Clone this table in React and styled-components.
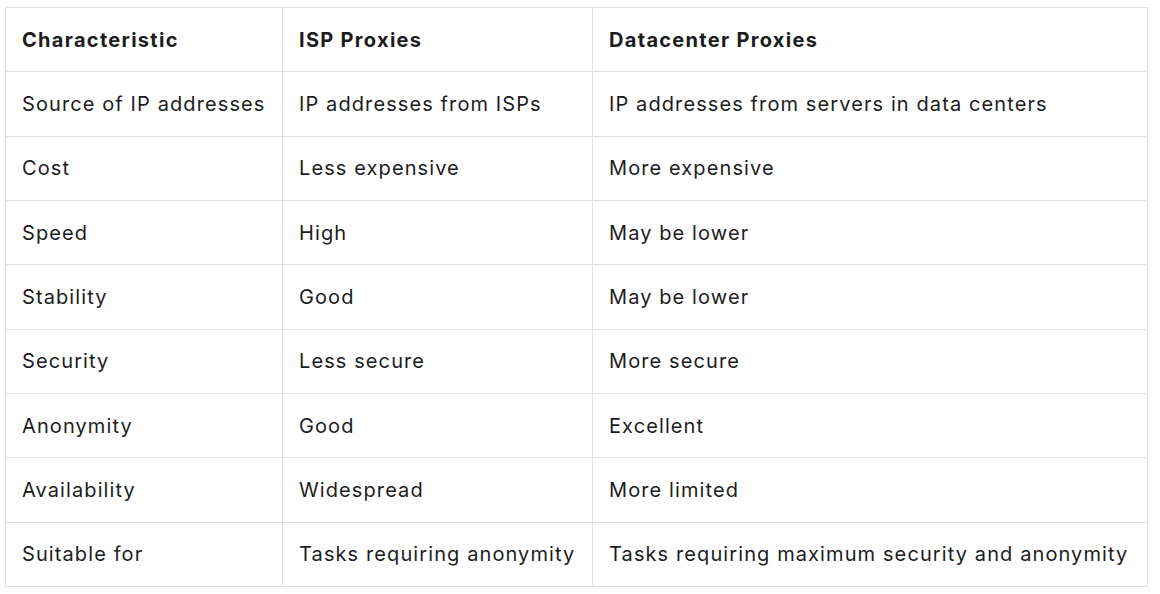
import React from "react";
import styled, { createGlobalStyle } from "styled-components";

const Global = createGlobalStyle`
  html, body { margin: 0; padding: 0; background: #ffffff; }
  body { font-family: Inter, "Noto Sans", sans-serif; -webkit-font-smoothing: antialiased; }
`;

const Page = styled.div`
  padding: 7px 0 0 5px;
`;

const Table = styled.table`
  border-collapse: collapse;
  width: 1142px;
  table-layout: fixed;
  color: #1c1c1e;
  font-size: 20px;
`;

const Col = styled.col`
  width: ${(p) => p.$w}px;
`;

const Row = styled.tr`
  height: 64.33px;
`;

const HeadCell = styled.th`
  border: 1px solid #dfdfe8;
  padding: 0 16px;
  text-align: left;
  font-weight: 700;
  line-height: 24px;
  letter-spacing: 1.3px;
  white-space: nowrap;
`;

const Cell = styled.td`
  border: 1px solid #dfdfe8;
  padding: 0 16px;
  font-weight: 400;
  line-height: 24px;
  letter-spacing: 1.1px;
  white-space: nowrap;
`;

const head = ["Characteristic", "ISP Proxies", "Datacenter Proxies"];
const rows = [
  ["Source of IP addresses", "IP addresses from ISPs", "IP addresses from servers in data centers"],
  ["Cost", "Less expensive", "More expensive"],
  ["Speed", "High", "May be lower"],
  ["Stability", "Good", "May be lower"],
  ["Security", "Less secure", "More secure"],
  ["Anonymity", "Good", "Excellent"],
  ["Availability", "Widespread", "More limited"],
  ["Suitable for", "Tasks requiring anonymity", "Tasks requiring maximum security and anonymity"],
];

export default function App() {
  return (
    <>
      <Global />
      <Page>
        <Table>
          <colgroup>
            <Col $w={277} />
            <Col $w={310} />
            <Col $w={555} />
          </colgroup>
          <thead>
            <Row>
              {head.map((h) => (
                <HeadCell key={h}>{h}</HeadCell>
              ))}
            </Row>
          </thead>
          <tbody>
            {rows.map((r) => (
              <Row key={r[0]}>
                {r.map((c, i) => (
                  <Cell key={i}>{c}</Cell>
                ))}
              </Row>
            ))}
          </tbody>
        </Table>
      </Page>
    </>
  );
}
